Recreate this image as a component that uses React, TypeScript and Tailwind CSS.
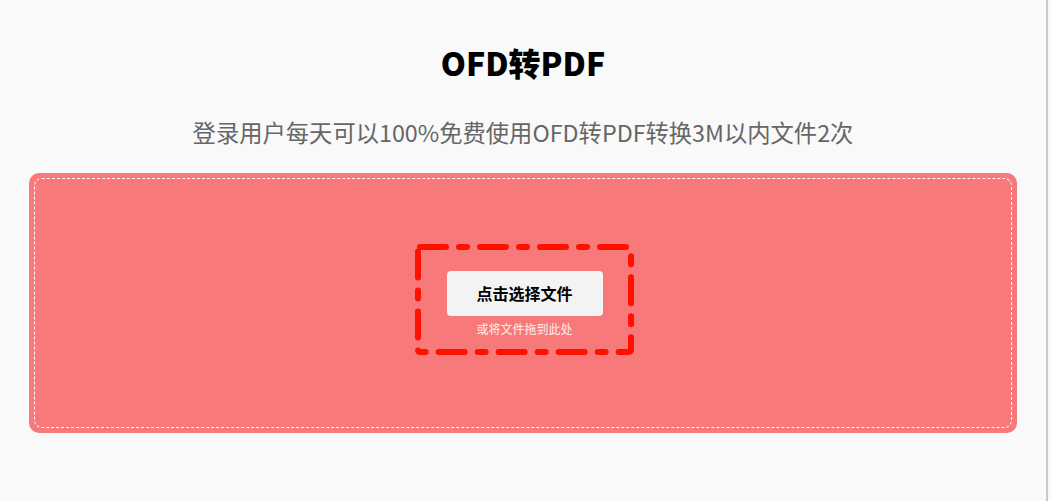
export default function App() {
  return (
    <div
      className="flex h-[501px] w-[1051px] bg-[#f9f9f9]"
      style={{ fontFamily: '"Noto Sans CJK SC", "Noto Sans", sans-serif' }}
    >
      {/* Page */}
      <div className="flex w-[1048px] flex-col items-center border-r-2 border-[#c9c9c9] pt-[38px]">
        <h1 className="text-[32px] font-black leading-[48px] text-black">OFD转PDF</h1>
        <p className="mt-[30px] text-[23.3px] leading-[32px] text-[#666666]">
          登录用户每天可以100%免费使用OFD转PDF转换3M以内文件2次
        </p>

        {/* Upload area */}
        <div className="mt-[25px] w-[988px] rounded-[10px] bg-[#f77979] p-[5px]">
          <div className="flex h-[250px] items-center justify-center rounded-[8px] border border-dashed border-white">
            <div className="relative mb-[8px] ml-[3px] flex h-[111px] w-[219px] flex-col items-center justify-center">
              <svg className="absolute inset-0" width="219" height="111" viewBox="0 0 219 111">
                <rect
                  x="3"
                  y="3"
                  width="213"
                  height="105"
                  rx="2"
                  fill="none"
                  stroke="#ff1000"
                  strokeWidth="6"
                  strokeLinecap="round"
                  strokeDasharray="26 13 8 13"
                />
              </svg>
              <button className="relative mt-[10px] flex h-[45px] w-[156px] items-center justify-center rounded-[4px] bg-[#f3f3f3] text-[16px] font-bold text-black">
                点击选择文件
              </button>
              <span className="relative mt-[4px] text-[12px] leading-[18px] text-[#fff0f0]">或将文件拖到此处</span>
            </div>
          </div>
        </div>
      </div>
    </div>
  );
}
